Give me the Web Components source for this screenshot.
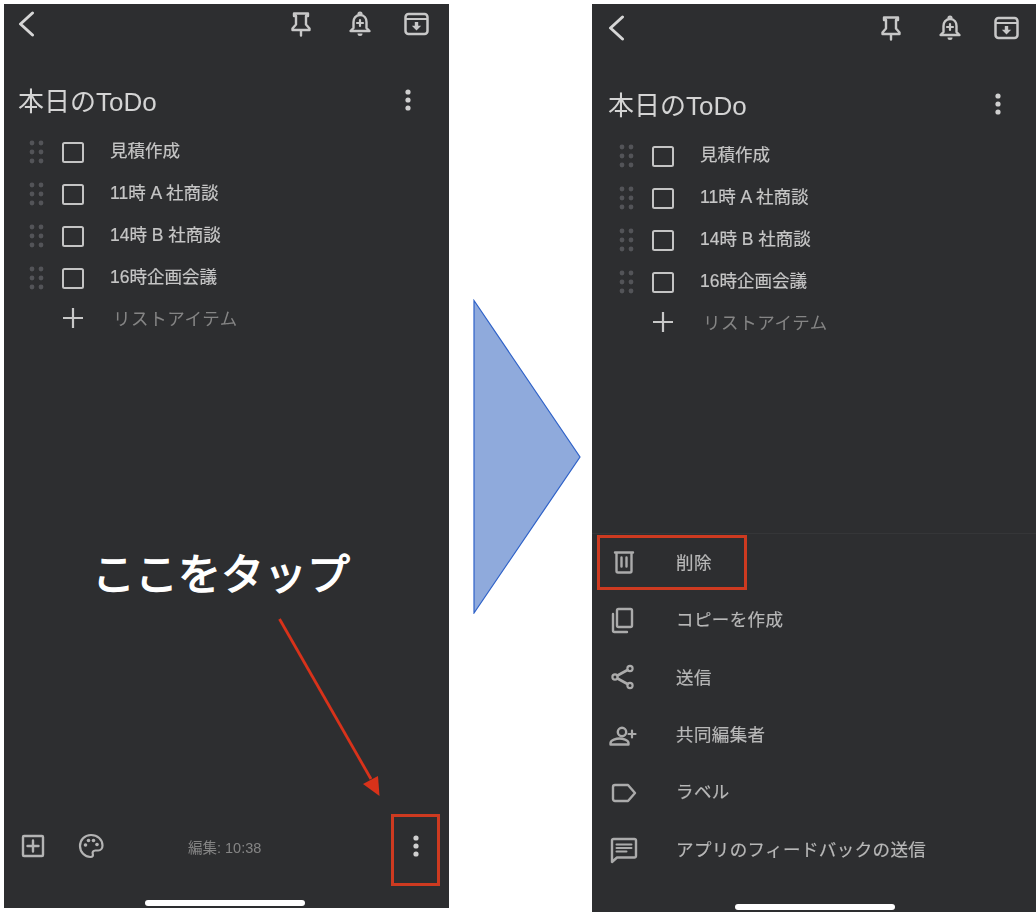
<!DOCTYPE html>
<html lang="ja">
<head>
<meta charset="utf-8">
<title>本日のToDo</title>
<style>
    html, body { margin: 0; background: #fff; }
    body { font-family: "Liberation Sans", "Noto Sans CJK JP", sans-serif; }
</style>
</head>
<body>
<howto-page>
    <phone-screen style="--w:445px; --h:904px; --inset:0px; --end:19px; --top:6px; --bar:141px">
        <note-top-bar></note-top-bar>
        <note-title>本日のToDo</note-title>
        <todo-item>見積作成</todo-item>
        <todo-item>11時 A 社商談</todo-item>
        <todo-item>14時 B 社商談</todo-item>
        <todo-item>16時企画会議</todo-item>
        <add-item>リストアイテム</add-item>
        <note-footer>編集: 10:38</note-footer>
        <tap-label slot="over">ここをタップ</tap-label>
        <red-box slot="over" style="--x:387px; --y:810px; --bw:49px; --bh:72px"></red-box>
        <pointer-arrow slot="over"></pointer-arrow>
    </phone-screen>
    <next-arrow></next-arrow>
    <phone-screen style="--w:444px; --h:908px; --inset:2px; --end:16px; --top:10px; --bar:143px">
        <note-top-bar></note-top-bar>
        <note-title>本日のToDo</note-title>
        <todo-item>見積作成</todo-item>
        <todo-item>11時 A 社商談</todo-item>
        <todo-item>14時 B 社商談</todo-item>
        <todo-item>16時企画会議</todo-item>
        <add-item>リストアイテム</add-item>
        <sheet-menu>
            <menu-row icon="trash">削除</menu-row>
            <menu-row icon="copy">コピーを作成</menu-row>
            <menu-row icon="share">送信</menu-row>
            <menu-row icon="person">共同編集者</menu-row>
            <menu-row icon="label">ラベル</menu-row>
            <menu-row icon="feedback">アプリのフィードバックの送信</menu-row>
        </sheet-menu>
        <red-box slot="over" style="--x:5px; --y:531px; --bw:150px; --bh:55px"></red-box>
    </phone-screen>
</howto-page>

<script>
const ICONS = {
    back: '<path d="M20.500 3 8.500 14l12 11" stroke-width="3"/>',
    pin: '<path d="M7 3.500h14v2.500h-2v8.500l3.500 4v1.500h-17v-1.500l3.500-4V6H7z M14 20v5.500" stroke-width="2.400"/>',
    bell: '<path d="M15 5c-4.500 0-6.500 3.500-6.500 7v6l-3 3h19l-3-3v-6c0-3.500-2-7-6.500-7z" stroke-width="2.400"/><path d="M13.500 4a1.500 1.500 0 0 1 3 0" /><path d="M12.500 23.500a2.500 2.500 0 0 0 5 0z" fill="currentColor" stroke="none"/><path d="M15 10v6M12 13h6"/>',
    archive: '<rect x="3.500" y="4" width="22" height="20" rx="3" stroke-width="2.500"/><path d="M4 9h21" /><path d="M14.500 20.500l-4.700-4.700h3V12h3.400v3.800h3z" fill="currentColor" stroke="none"/>',
    add: '<rect x="4" y="4" width="20" height="20" rx="1" stroke-width="2.400"/><path d="M14 8.500v11M8.500 14h11" stroke-width="2.400"/>',
    palette: '<path d="M14 3C7.500 3 3 8 3 14s4.800 11 10.500 11c2.200 0 2.800-1.400 2.300-2.800-.7-2 .3-3.700 2.500-3.700h3C23.500 18.500 25.500 16.500 25.500 13.500 25.500 7.500 20.500 3 14 3z"/><g fill="currentColor" stroke="none"><circle cx="8.500" cy="13" r="1.800"/><circle cx="11.500" cy="8.500" r="1.800"/><circle cx="16.500" cy="8.500" r="1.800"/><circle cx="20" cy="12.500" r="1.800"/></g>',
    dots: '<g fill="currentColor" stroke="none"><circle cx="14" cy="6" r="2.600"/><circle cx="14" cy="14" r="2.600"/><circle cx="14" cy="22" r="2.600"/></g>',
    trash: '<path d="M7 4.500h18M8.500 4.500V23a1.500 1.500 0 0 0 1.500 1.500h12a1.500 1.500 0 0 0 1.500-1.500V4.500M13.500 9.500v9M18.500 9.500v9" stroke-width="2.400"/>',
    copy: '<rect x="9" y="3" width="15" height="18" rx="1.500" stroke-width="2.400"/><path d="M5 8v16.500A1.500 1.500 0 0 0 6.500 26H19" stroke-width="2.400"/>',
    share: '<circle cx="22" cy="5.500" r="2.600"/><circle cx="7" cy="14" r="2.600"/><circle cx="22" cy="22.500" r="2.600"/><path d="M9.500 12.500 19.500 7M9.500 15.500 19.500 21" stroke-width="2.600"/>',
    person: '<circle cx="14" cy="11" r="4.200" stroke-width="2.400"/><path d="M2.500 23.500v-1.500c0-3 6-4.500 9-4.500s9 1.500 9 4.500v1.500z" stroke-width="2.400"/><path d="M24 9.500v7M20.500 13h7"/>',
    label: '<path d="M5 9a2 2 0 0 1 2-2H20L27 15l-7 8H7a2 2 0 0 1-2-2z" stroke-width="2.400"/>',
    feedback: '<path d="M4 5.500A1.500 1.500 0 0 1 5.500 4h21A1.500 1.500 0 0 1 28 5.500V21a1.500 1.500 0 0 1-1.500 1.500H9L4 27z" stroke-width="2.400"/><path d="M8.500 9.500h15M8.500 13h15M8.500 16.500h10" stroke-width="2"/>'
};

function iconSvg(name, size = 28) {
    return `<svg width="${size}" height="${size}" viewBox="0 0 28 28" fill="none" stroke="currentColor" stroke-width="2.200" stroke-linejoin="round" stroke-linecap="round" style="display:block;flex:none;overflow:visible">${ICONS[name]}</svg>`;
}

// small helper so every element just gives css + html
class ShadowEl extends HTMLElement {
    constructor() {
        super();
        this.attachShadow({ mode: 'open' });
    }
    connectedCallback() {
        this.shadowRoot.innerHTML = `<style>${this.css()}</style>${this.html()}`;
    }
    css() { return ':host { display: block; }'; }
    html() { return '<slot></slot>'; }
}

customElements.define('howto-page', class extends ShadowEl {
    css() {
        return `:host { display: flex; align-items: flex-start; width: 1036px; height: 912px; overflow: hidden;
            padding: 4px 0 0 4px; box-sizing: border-box; }`;
    }
});

customElements.define('phone-screen', class extends ShadowEl {
    css() {
        return `:host { display: block; position: relative; flex: none; width: var(--w); height: var(--h); background: #2d2e30; }
            .flow { display: flex; flex-direction: column; height: 100%; filter: blur(.5px); }
            .bar { flex: none; width: 160px; height: 6px; border-radius: 3px; background: #fff;
                margin: 0 0 2px var(--bar); }`;
    }
    html() {
        return `<div class="flow"><slot></slot><div class="bar"></div></div><slot name="over"></slot>`;
    }
});

customElements.define('note-top-bar', class extends ShadowEl {
    css() {
        return `:host { display: flex; align-items: center; gap: 29.500px; flex: none; color: #c8c8c8;
                padding: var(--top) var(--end) 0 calc(8px + var(--inset)); }
            .back { margin-right: auto; color: #d6d6d6; }`;
    }
    html() {
        return `<div class="back">${iconSvg('back')}</div>${iconSvg('pin')}${iconSvg('bell')}${iconSvg('archive')}`;
    }
});

customElements.define('note-title', class extends ShadowEl {
    css() {
        return `:host { display: flex; align-items: center; flex: none; height: 40px; margin: 44px 0 9px;
                padding: 0 calc(var(--end) + 8px) 0 calc(14px + var(--inset)); color: #d4d4d4; font-size: 26px; }
            span { flex: 1; margin-top: -5px; } svg { color: #cfcfcf; margin-top: -4px; }`;
    }
    html() { return `<span><slot></slot></span>${iconSvg('dots')}`; }
});

customElements.define('todo-item', class extends ShadowEl {
    css() {
        return `:host { display: flex; align-items: center; flex: none; height: 42px; color: #c6c6c6; font-size: 17.500px;
                -webkit-text-stroke: .2px #c6c6c6; padding-left: calc(23px + var(--inset)); }
            .grip { display: block; margin-right: 15px; }
            .check { box-sizing: border-box; width: 22px; height: 21px; border: 2.200px solid #c4c4c4; border-radius: 2.500px; margin-right: 26px; }
            span { margin-top: -5px; }`;
    }
    html() {
        let dots = '';
        for (const y of [3, 12, 21]) for (const x of [5, 14]) dots += `<circle cx="${x}" cy="${y}" r="2.400"/>`;
        return `<svg class="grip" width="20" height="24" viewBox="0 0 20 24" fill="#535458">${dots}</svg><div class="check"></div><span><slot></slot></span>`;
    }
});

customElements.define('add-item', class extends ShadowEl {
    css() {
        return `:host { display: flex; align-items: center; flex: none; height: 40px; color: #858585; font-size: 17.500px;
                letter-spacing: .6px; padding-left: calc(61px + var(--inset)); }
            svg { margin: -2px 28px 0 -4px; }
            span { margin-top: -4px; }`;
    }
    html() {
        return `<svg width="24" height="24" viewBox="0 0 24 24" stroke="#c8c8c8" stroke-width="2.200"><path d="M12 2v20M2 12h20"/></svg><span><slot></slot></span>`;
    }
});

customElements.define('note-footer', class extends ShadowEl {
    css() {
        return `:host { display: flex; align-items: center; flex: none; height: 56px; margin: auto 0 26px; color: #b4b4b4;
                padding: 0 19px 0 15px; }
            .gap { width: 30px; }
            .time { margin-left: 83px; color: #858585; font-size: 14.500px; }
            .more { margin-left: auto; color: #d0d0d0; }`;
    }
    html() {
        return `${iconSvg('add')}<div class="gap"></div>${iconSvg('palette')}<div class="time"><slot></slot></div><div class="more">${iconSvg('dots')}</div>`;
    }
});

customElements.define('sheet-menu', class extends ShadowEl {
    css() {
        return `:host { display: block; flex: none; margin: auto 0 26px; border-top: 1px solid #353638; }`;
    }
});

customElements.define('menu-row', class extends ShadowEl {
    css() {
        return `:host { display: flex; align-items: center; height: 57.400px; padding-left: 16px; color: #b8b8b8; font-size: 17.500px;
                letter-spacing: .4px; -webkit-text-stroke: .2px #b8b8b8; }
            svg { margin-right: 40px; color: #ababab; }
            span { margin-top: -2px; }`;
    }
    html() { return `${iconSvg(this.getAttribute('icon'))}<span><slot></slot></span>`; }
});

customElements.define('next-arrow', class extends ShadowEl {
    css() {
        return `:host { display: block; flex: none; width: 108px; height: 315px; margin: 295px 11px 0 24px; }
            svg { display: block; }`;
    }
    html() {
        return `<svg width="108" height="315" viewBox="0 0 108 315"><path d="M1 1.500 107 158 1 314z" fill="#8faadc" stroke="#2f62c8" stroke-width="1.200"/></svg>`;
    }
});

// annotations lying over the screenshots
customElements.define('red-box', class extends ShadowEl {
    css() {
        return `:host { display: block; position: absolute; box-sizing: border-box; left: var(--x); top: var(--y);
            width: var(--bw); height: var(--bh); border: 3px solid #cd3a20; }`;
    }
    html() { return ''; }
});

customElements.define('tap-label', class extends ShadowEl {
    css() {
        return `:host { display: block; position: absolute; left: 88px; top: 536px; color: #fff; font-size: 43px;
            font-weight: 400; -webkit-text-stroke: 1.300px #fff; white-space: nowrap; }`;
    }
});

customElements.define('pointer-arrow', class extends ShadowEl {
    css() {
        return `:host { display: block; position: absolute; left: 270px; top: 610px; }
            svg { display: block; }`;
    }
    html() {
        return `<svg width="110" height="190" viewBox="0 0 110 190"><path d="M5.500 5 97 165" stroke="#d8321a" stroke-width="2.800" fill="none"/><path d="M105.500 182 89 170l15-8z" fill="#d8321a"/></svg>`;
    }
});
</script>
</body>
</html>
